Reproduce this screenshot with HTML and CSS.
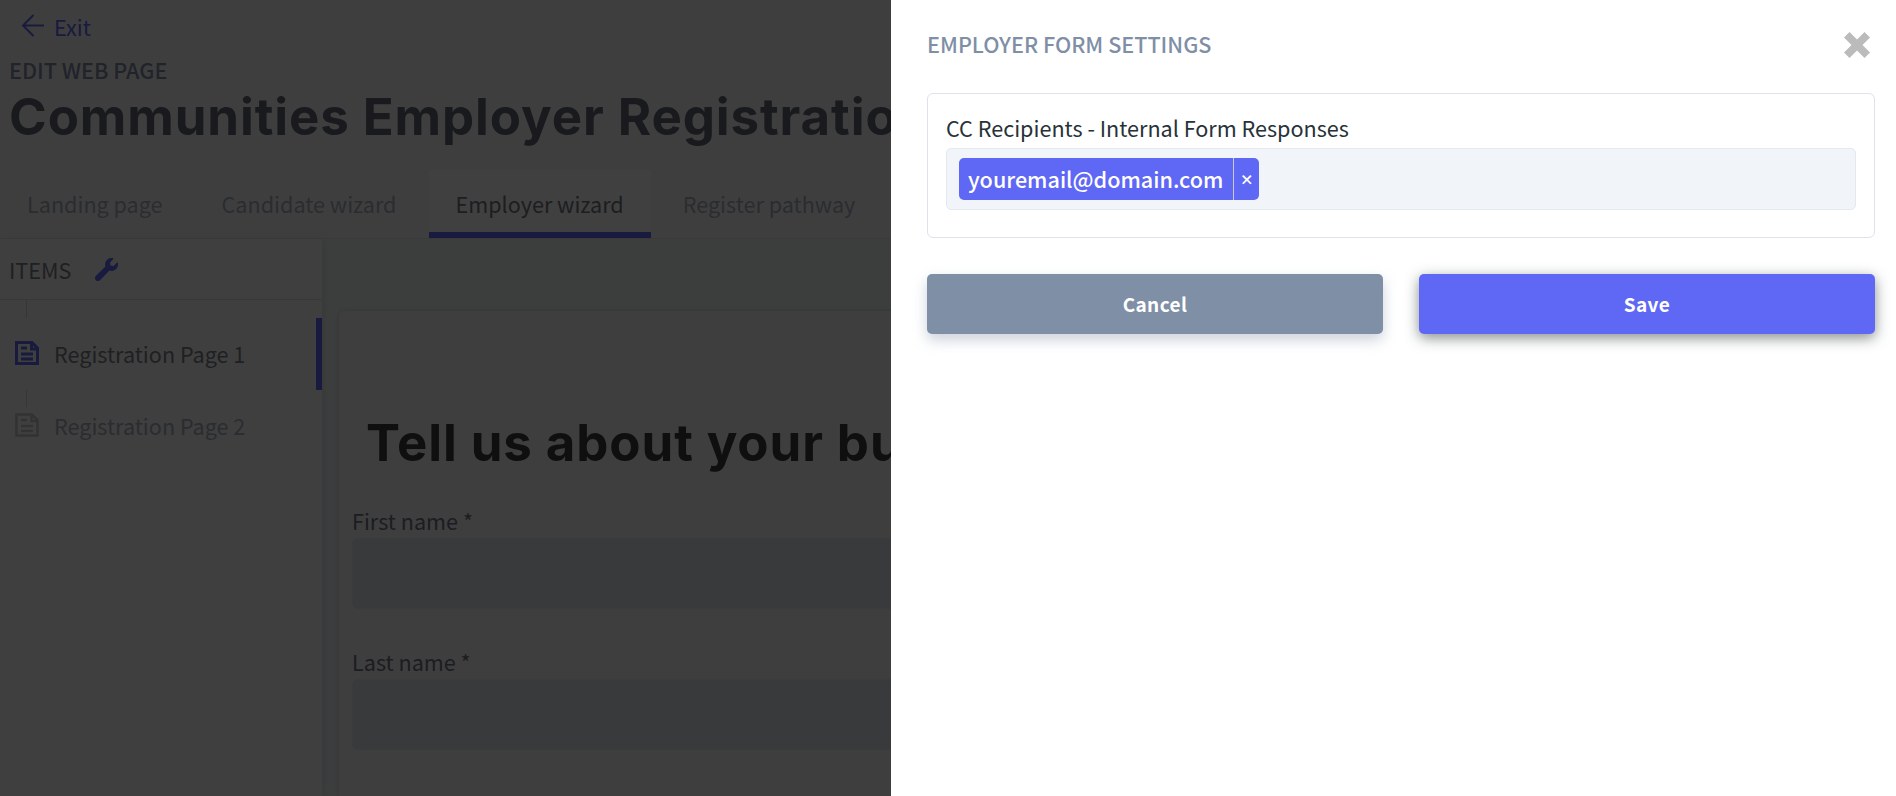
FILE: index.html

```html
<!DOCTYPE html>
<html lang="en">
<head>
  <meta charset="UTF-8" />
  <meta name="viewport" content="width=device-width, initial-scale=1.0"/>
  <title>Edit Web Page</title>
  <link rel="stylesheet" href="styles.css">
</head>
<body>
  <div class="page">
    <header class="page-head">
      <a class="exit" href="#">
        <svg class="exit-arrow" viewBox="0 0 24 24"><path d="M23 11.5H2M12.500 1 2 11.500 12.500 22"/></svg>
        <span>Exit</span>
      </a>
      <div class="eyebrow">EDIT WEB PAGE</div>
      <h1 class="page-title">Communities Employer Registration</h1>
    </header>

    <nav class="tabs">
      <a class="tab" href="#">Landing page</a>
      <a class="tab" href="#">Candidate wizard</a>
      <a class="tab active" href="#">Employer wizard</a>
      <a class="tab" href="#">Register pathway</a>
    </nav>

    <div class="workspace">
      <aside class="sidebar">
        <div class="sidebar-head">
          <span>ITEMS</span>
          <svg class="wrench" viewBox="0 0 512 512"><path d="M507.730 109.100c-2.240-9.030-13.540-12.090-20.120-5.510l-74.360 74.360-67.880-11.310-11.310-67.880 74.360-74.360c6.620-6.620 3.430-17.900-5.660-20.160-47.380-11.740-99.550.91-136.580 37.930-39.640 39.640-50.550 97.100-34.050 147.200L18.740 402.760c-24.990 24.990-24.990 65.510 0 90.500 24.990 24.990 65.510 24.990 90.500 0l213.210-213.210c50.120 16.710 107.470 5.680 147.370-34.220 37.070-37.070 49.700-89.320 37.910-136.730z"/></svg>
        </div>
        <ul class="tree">
          <li class="tree-item active">
            <span class="tree-icon">
              <svg viewBox="0 0 24 24"><path d="M1.500 1.500h15.500l5.500 5.500v15.500h-21zM16.500 2v6h6M6 7h6M6 13h12M6 18h12"/></svg>
            </span>
            Registration Page 1
          </li>
          <li class="tree-item">
            <span class="tree-icon">
              <svg viewBox="0 0 24 24"><path d="M1.500 1.500h15.500l5.500 5.500v15.500h-21zM16.500 2v6h6M6 7h6M6 13h12M6 18h12"/></svg>
            </span>
            Registration Page 2
          </li>
        </ul>
      </aside>

      <main class="canvas">
        <section class="card">
          <h2 class="card-title">Tell us about your business</h2>
          <label class="field-label">First name *</label>
          <div class="field-input"></div>
          <label class="field-label">Last name *</label>
          <div class="field-input"></div>
        </section>
      </main>
    </div>
  </div>

  <div class="scrim">
    <div class="panel">
      <div class="panel-head">
        <h3 class="panel-title">EMPLOYER FORM SETTINGS</h3>
        <svg class="panel-close" viewBox="0 0 26 26"><path d="M5.500 0 13 7.500 20.500 0 26 5.500 18.500 13 26 20.500 20.500 26 13 18.500 5.500 26 0 20.500 7.500 13 0 5.500z"/></svg>
      </div>

      <div class="panel-box">
        <label class="box-label">CC Recipients - Internal Form Responses</label>
        <div class="tags-input">
          <span class="tag">
            <span class="tag-text">youremail@domain.com</span>
            <span class="tag-remove">×</span>
          </span>
        </div>
      </div>

      <div class="panel-actions">
        <button class="btn btn-cancel">Cancel</button>
        <button class="btn btn-save">Save</button>
      </div>
    </div>
  </div>
</body>
</html>
```

FILE: styles.css

```css
* {
  box-sizing: border-box;
}
html, body {
  height: 100%;
}
body {
  margin: 0;
  overflow: hidden;
  background: #f8f8f8;
  color: #6f7480;
  font-family: "Noto Sans CJK SC", "Noto Sans", sans-serif;
  font-size: 21.6px;
}
a {
  color: inherit;
  text-decoration: none;
}

.page {
  height: 100%;
  display: flex;
  flex-direction: column;
}
.page-head {
  padding: 14px 0 0 9px;
  height: 170px;
  white-space: nowrap;
}
.exit {
  display: flex;
  align-items: center;
  gap: 9px;
  height: 24px;
  padding-left: 12px;
  color: #5f67f5;
}
.exit-arrow {
  width: 24px;
  height: 24px;
  fill: none;
  stroke: #5f67f5;
  stroke-width: 2;
}
.eyebrow {
  margin-top: 17px;
  line-height: 30px;
  font-weight: 500;
  color: #7f8fa6;
}
.page-title {
  margin: 2px 0 0;
  line-height: 60px;
  font-family: Inter, sans-serif;
  font-size: 51px;
  font-weight: 700;
  color: #646874;
  letter-spacing: 0.9px;
}

.tabs {
  display: flex;
  gap: 5px;
  height: 69px;
  border-bottom: 1px solid #e8e8e8;
}
.tab {
  display: flex;
  align-items: center;
  padding: 0 27px 2px;
  color: #a8b0c0;
}
.tab.active {
  background: #ffffff;
  color: #747880;
  border-bottom: 6px solid #5f67f5;
  padding-top: 5px;
  padding-bottom: 0;
}

.workspace {
  flex: 1;
  display: flex;
  min-height: 0;
}
.sidebar {
  width: 322px;
  flex-shrink: 0;
  background: #f9f9f9;
  box-shadow: 2px 0 6px rgba(0,0,0,0.08);
  z-index: 1;
}
.sidebar-head {
  display: flex;
  align-items: center;
  gap: 24px;
  height: 61px;
  padding-left: 9px;
  border-bottom: 1px solid #e0e0e0;
  color: #7c8088;
}
.wrench {
  width: 23px;
  height: 23px;
  fill: #5f67f5;
}
.tree {
  position: relative;
  list-style: none;
  margin: 0;
  padding: 18px 0 0;
}
.tree::before {
  content: "";
  position: absolute;
  left: 26px;
  top: 0;
  width: 1px;
  height: 108px;
  background: #d8d8d8;
}
.tree-item {
  position: relative;
  display: flex;
  align-items: center;
  gap: 10px;
  height: 72px;
  padding: 0 0 2px 9px;
  color: #a8b0c0;
}
.tree-item.active {
  background: #fcfcfc;
  color: #7c8088;
  border-right: 6px solid #5f67f5;
}
.tree-icon {
  display: flex;
  align-items: center;
  justify-content: center;
  width: 35px;
  height: 36px;
  background: #fbfbfb;
}
.tree-icon svg {
  width: 24px;
  height: 24px;
  fill: none;
  stroke: #c4c8c8;
  stroke-width: 2.600;
}
.tree-item.active .tree-icon svg {
  stroke: #5f67f5;
  stroke-width: 3;
}

.canvas {
  flex: 1;
  min-width: 0;
  padding: 72px 0 0 17px;
  background: #eff3f4;
}
.card {
  height: 100%;
  padding: 96px 0 0 13px;
  background: #f8f8f8;
  border-radius: 5px 0 0 0;
  box-shadow: 0 0 5px rgba(0,0,0,0.16);
}
.card-title {
  margin: 0 0 27px 14px;
  line-height: 72px;
  font-family: Inter, sans-serif;
  font-size: 51px;
  font-weight: 700;
  color: #3c3c3c;
  letter-spacing: 0.9px;
  white-space: nowrap;
}
.field-label {
  display: block;
  line-height: 30px;
  color: #6f7480;
}
.field-input {
  height: 71px;
  margin: 2px 0 38px;
  background: #e4e7ec;
  border: 1px solid #e8eaec;
  border-radius: 5px 0 0 5px;
}

.scrim {
  position: fixed;
  inset: 0;
  background: rgba(0,0,0,0.75);
  z-index: 10;
}
.panel {
  position: absolute;
  top: 0;
  right: 0;
  bottom: 0;
  width: 1005px;
  padding: 32px 21px 0 36px;
  background: #ffffff;
}
.panel-head {
  display: flex;
  justify-content: space-between;
  align-items: center;
  height: 26px;
  padding-right: 5px;
}
.panel-title {
  margin: 0 0 4px;
  font-size: 21.6px;
  font-weight: 500;
  color: #7f8fa6;
}
.panel-close {
  width: 26px;
  height: 26px;
  fill: #bbbbbb;
}
.panel-box {
  margin-top: 35px;
  height: 145px;
  padding: 19px 18px 0;
  border: 1px solid #dfe1ec;
  border-radius: 6px;
}
.box-label {
  display: block;
  line-height: 30px;
  color: #263238;
}
.tags-input {
  height: 62px;
  margin-top: 5px;
  padding: 9px 12px;
  background: #f1f4f9;
  border: 1px solid #e4e8f0;
  border-radius: 5px;
}
.tag {
  display: inline-flex;
  align-items: center;
  height: 42px;
  background: #5f67f5;
  border-radius: 5px;
  color: #ffffff;
}
.tag-text {
  padding: 0 10px 0 9px;
  font-size: 21.6px;
  font-weight: 500;
  line-height: 42px;
  border-right: 1px solid #c9c9d8;
}
.tag-remove {
  width: 25px;
  text-align: center;
  font-size: 14px;
  font-weight: 900;
}
.panel-actions {
  display: flex;
  gap: 36px;
  margin-top: 36px;
}
.btn {
  flex: 1;
  height: 60px;
  padding: 0 0 2px;
  border: none;
  border-radius: 5px;
  color: #ffffff;
  font-family: inherit;
  font-size: 19px;
  font-weight: 700;
  letter-spacing: 0.4px;
  cursor: pointer;
}
.btn-cancel {
  background: #7f8fa6;
  box-shadow: 0 6px 14px rgba(127,143,166,0.4);
}
.btn-save {
  background: #5f67f5;
  box-shadow: 0 4px 14px rgba(40,50,50,0.55);
}
```
